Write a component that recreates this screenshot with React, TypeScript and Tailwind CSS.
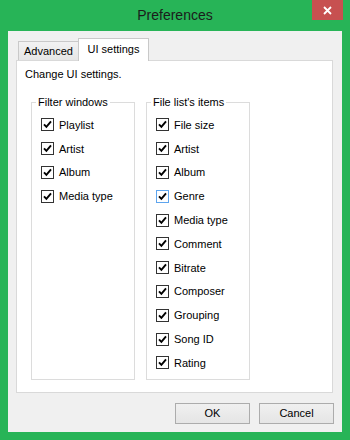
const filterItems = ["Playlist", "Artist", "Album", "Media type"];
const fileItems = [
  "File size",
  "Artist",
  "Album",
  "Genre",
  "Media type",
  "Comment",
  "Bitrate",
  "Composer",
  "Grouping",
  "Song ID",
  "Rating",
];

function CheckBox({ hover }: { hover?: boolean }) {
  return (
    <div
      className={`w-[13px] h-[13px] border bg-white flex items-center justify-center ${
        hover ? "border-[#5ea5ee]" : "border-[#333333]"
      }`}
    >
      <svg width="11" height="11" viewBox="0 0 11 11">
        <path d="M2 5.3 L4.4 7.8 L9 2.4" fill="none" stroke="#000" strokeWidth="1.9" />
      </svg>
    </div>
  );
}

function Group({ title, items, hoverIndex }: { title: string; items: string[]; hoverIndex?: number }) {
  return (
    <div className="w-[104px] h-[278px] border border-[#dcdcdc] flex flex-col">
      <span className="-mt-[8px] ml-[4px] px-[2px] self-start bg-white leading-[14px]">{title}</span>
      <div className="mt-[4px] pl-[9px] flex flex-col">
        {items.map((item, i) => (
          <div key={item} className="h-[23.8px] flex items-center gap-[5px]">
            <CheckBox hover={i === hoverIndex} />
            <span className="leading-[14px]">{item}</span>
          </div>
        ))}
      </div>
    </div>
  );
}

export default function App() {
  return (
    <div
      className="w-[350px] h-[440px] bg-[#27b457] flex flex-col text-[11px] text-black"
      style={{ fontFamily: '"Liberation Sans", Arial, sans-serif' }}
    >
      {/* Title bar */}
      <div className="h-[31px] relative flex items-center justify-center">
        <span className="text-[14px] text-[#1b1b1b] -mt-[1px]">Preferences</span>
        <div className="absolute top-0 right-[7px] w-[31px] h-[20px] bg-[#c75050] flex items-center justify-center">
          <svg width="9" height="9" viewBox="0 0 9 9">
            <path d="M1 1 L8 8 M8 1 L1 8" stroke="#fff" strokeWidth="1.8" />
          </svg>
        </div>
      </div>

      {/* Client area */}
      <div className="mx-[8px] h-[401px] bg-[#f0f0f0] pt-[7px] pl-[8px] pr-[9px] flex flex-col">
        {/* Tabs */}
        <div className="h-[22px] flex items-end pl-[2px]">
          <div className="w-[61px] h-[19px] border border-b-0 border-[#c9c9c9] bg-gradient-to-b from-[#f2f2f2] to-[#e6e6e6] flex items-center justify-center pt-[1px]">
            Advanced
          </div>
          <div className="relative z-10 -ml-px -mb-px w-[71px] h-[23px] border border-b-0 border-[#c9c9c9] bg-white flex items-center justify-center pb-[2px]">
            UI settings
          </div>
        </div>

        {/* Panel */}
        <div className="h-[333px] border border-[#d9d9d9] bg-white flex flex-col">
          <div className="pt-[6px] pl-[8px] leading-[14px]">Change UI settings.</div>
          <div className="mt-[21px] pl-[14px] flex gap-[11px]">
            <Group title="Filter windows" items={filterItems} />
            <Group title="File list's items" items={fileItems} hoverIndex={3} />
          </div>
        </div>

        {/* Buttons */}
        <div className="mt-[10px] -mr-px flex justify-end gap-[9px]">
          <button className="w-[75px] h-[21px] border border-[#acacac] bg-gradient-to-b from-[#f0f0f0] to-[#e5e5e5] flex items-center justify-center">
            OK
          </button>
          <button className="w-[75px] h-[21px] border border-[#acacac] bg-gradient-to-b from-[#f0f0f0] to-[#e5e5e5] flex items-center justify-center">
            Cancel
          </button>
        </div>
      </div>
    </div>
  );
}
